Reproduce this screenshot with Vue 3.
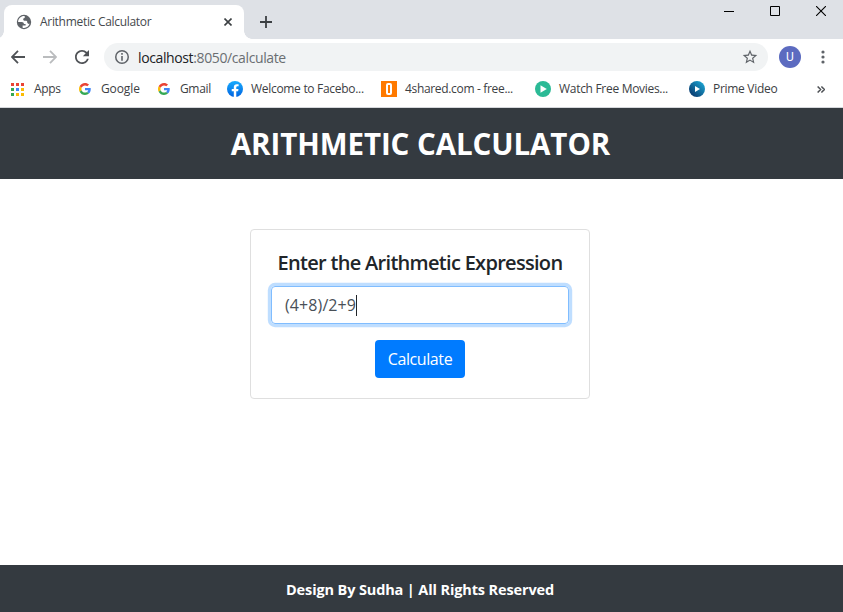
<script setup>
import { ref } from 'vue'

const expression = ref('(4+8)/2+9')

const bookmarks = [
  { id: 'apps', label: 'Apps', width: 68, spacing: -0.3 },
  { id: 'google', label: 'Google', width: 79, spacing: -0.1 },
  { id: 'google', label: 'Gmail', width: 69, spacing: -0.35 },
  { id: 'facebook', label: 'Welcome to Facebo...', width: 154, spacing: -0.3 },
  { id: 'shared', label: '4shared.com - free...', width: 154, spacing: -0.33 },
  { id: 'movies', label: 'Watch Free Movies...', width: 154, spacing: -0.3 },
  { id: 'prime', label: 'Prime Video', width: 119, spacing: -0.3 },
]
const appColors = ['#ea4335', '#ea4335', '#ea4335', '#34a853', '#4285f4', '#fbbc05', '#34a853', '#fbbc05', '#fbbc05']
</script>

<template>
  <div class="window">
    <div class="tabstrip">
      <div class="tab">
        <svg class="globe" width="16" height="16" viewBox="0 0 16 16"><circle cx="8" cy="8" r="7.200" fill="#5f6368" /><path fill="#fff" d="M8.700 2.100C5.300 1.800 2.300 4.400 2.100 7.900h3.700c1.400 0 2.100.8 2.100 2.100h1.700v1.600H6.600v2.100c3 .8 6.200-.9 7.100-4.100-.7.500-1.800.4-2.300-.5-.4-1 .1-1.500-.6-2-.8-.6-2.500.2-3.300-.8-.7-.9-.2-2.200 1.200-2.200V2.100z" /></svg>
        <span class="tab-title">Arithmetic Calculator</span>
        <svg class="tab-close" width="8" height="8" viewBox="0 0 8 8"><path d="M.5.5l7 7M7.500.5l-7 7" stroke="#3c4043" stroke-width="1.600" /></svg>
      </div>
      <svg class="new-tab" width="12" height="12" viewBox="0 0 12 12"><path d="M6 0v12M0 6h12" stroke="#3c4043" stroke-width="1.800" /></svg>
      <div class="controls">
        <svg width="10" height="10" viewBox="0 0 10 10"><path d="M0 5.500h10" stroke="#000" /></svg>
        <svg width="10" height="10" viewBox="0 0 10 10"><path d="M.5.5h9v9h-9z" stroke="#000" fill="none" /></svg>
        <svg width="10" height="10" viewBox="0 0 10 10"><path d="M0 0l10 10M10 0L0 10" stroke="#000" stroke-width="1.100" /></svg>
      </div>
    </div>

    <div class="toolbar">
      <svg class="back" width="14" height="14" viewBox="0 0 14 14"><path d="M14 7H1M7 .8L.9 7 7 13.200" fill="none" stroke="#4f5256" stroke-width="1.800" /></svg>
      <svg class="forward" width="14" height="14" viewBox="0 0 14 14"><path d="M0 7h13M7 .8L13.100 7 7 13.200" fill="none" stroke="#babcbe" stroke-width="1.800" /></svg>
      <svg class="reload" width="14" height="14" viewBox="4 4 16 16"><path fill="#4f5256" d="M17.650 6.350C16.200 4.900 14.210 4 12 4c-4.420 0-7.990 3.580-7.990 8s3.570 8 7.990 8c3.730 0 6.840-2.550 7.730-6h-2.080c-.82 2.330-3.040 4-5.650 4-3.310 0-6-2.690-6-6s2.690-6 6-6c1.660 0 3.140.69 4.220 1.780L13 11h7V4l-2.350 2.350z" /></svg>
      <div class="omnibox">
        <svg width="14" height="14" viewBox="0 0 14 14"><circle cx="7" cy="7" r="6.250" fill="none" stroke="#5f6368" stroke-width="1.500" /><path d="M7 3.100v1.700M7 6v4.800" stroke="#5f6368" stroke-width="1.600" /></svg>
        <span class="url"><b>localhost</b>:8050/calculate</span>
        <svg class="star" width="16" height="16" viewBox="1 1 22 22"><path fill="#5f6368" d="M22 9.240l-7.190-.62L12 2 9.190 8.630 2 9.240l5.460 4.730L5.820 21 12 17.270 18.180 21l-1.630-7.030L22 9.240zM12 15.400l-3.760 2.270 1-4.280-3.320-2.880 4.380-.38L12 6.100l1.710 4.040 4.380.38-3.320 2.880 1 4.280L12 15.400z" /></svg>
      </div>
      <span class="avatar">U</span>
      <svg class="menu" width="4" height="14" viewBox="0 0 4 14" fill="#5f6368"><circle cx="2" cy="2" r="1.600" /><circle cx="2" cy="7" r="1.600" /><circle cx="2" cy="12" r="1.600" /></svg>
    </div>

    <div class="bookmarks">
      <div v-for="b in bookmarks" :key="b.label" class="bookmark" :class="'mark-' + b.id" :style="{ width: b.width + 'px' }">
        <svg v-if="b.id === 'apps'" width="13" height="13" viewBox="0 0 13 13"><rect v-for="(c, i) in appColors" :key="i" :x="(i % 3) * 5" :y="Math.floor(i / 3) * 5" width="3" height="3" :fill="c" /></svg>
        <svg v-else-if="b.id === 'google'" width="12" height="12" viewBox="0 0 48 48">
          <path fill="#ea4335" d="M24 9.500c3.540 0 6.710 1.220 9.210 3.600l6.850-6.850C35.900 2.380 30.470 0 24 0 14.620 0 6.510 5.380 2.560 13.220l7.980 6.190C12.430 13.720 17.740 9.500 24 9.500z" />
          <path fill="#4285f4" d="M46.980 24.550c0-1.570-.15-3.090-.38-4.550H24v9.020h12.940c-.58 2.960-2.260 5.480-4.780 7.180l7.730 6c4.510-4.180 7.090-10.360 7.090-17.650z" />
          <path fill="#fbbc05" d="M10.530 28.590c-.48-1.450-.76-2.990-.76-4.590s.27-3.140.76-4.590l-7.980-6.190C.92 16.460 0 20.120 0 24c0 3.880.92 7.540 2.560 10.780l7.970-6.190z" />
          <path fill="#34a853" d="M24 48c6.480 0 11.930-2.130 15.890-5.810l-7.730-6c-2.150 1.450-4.920 2.300-8.160 2.300-6.260 0-11.570-4.220-13.470-9.910l-7.980 6.190C6.510 42.620 14.620 48 24 48z" />
        </svg>
        <svg v-else-if="b.id === 'facebook'" width="16" height="16" viewBox="0 0 24 24"><defs><linearGradient id="fb" x2="0" y2="1"><stop stop-color="#18acfe" /><stop offset="1" stop-color="#0163e0" /></linearGradient></defs><circle cx="12" cy="12" r="12" fill="url(#fb)" /><path fill="#fff" d="M16.700 15.500l.5-3.500h-3.300V9.800c0-1 .5-1.900 2-1.900h1.500v-3s-1.400-.2-2.700-.2c-2.800 0-4.500 1.700-4.500 4.700V12H7.100v3.500h3.100v8.350a12 12 0 0 0 3.700 0V15.500z" /></svg>
        <svg v-else-if="b.id === 'shared'" width="16" height="16" viewBox="0 0 16 16"><path fill="#ff7a00" d="M0 0h16v16H0z" /><rect x="6" y="3" width="4" height="10" rx="1" fill="none" stroke="#fff" stroke-width="2" /></svg>
        <svg v-else-if="b.id === 'movies'" width="16" height="16" viewBox="0 0 16 16"><circle cx="8" cy="8" r="8" fill="#2bba96" /><path d="M5.500 4.200v7.600L11.800 8z" fill="#fff" /></svg>
        <svg v-else width="16" height="16" viewBox="0 0 16 16"><defs><linearGradient id="pv" x1="1" x2="0" y2="1"><stop offset=".1" stop-color="#1ba4d2" /><stop offset=".8" stop-color="#0b4478" /></linearGradient></defs><circle cx="8" cy="8" r="8" fill="url(#pv)" /><path d="M6 5v6l5-3z" fill="#fff" /></svg>
        <span class="label" :style="{ letterSpacing: b.spacing + 'px' }">{{ b.label }}</span>
      </div>
      <svg class="more" width="8" height="7" viewBox="0 0 8 7"><path d="M.6.5l3 3-3 3M4.400.5l3 3-3 3" fill="none" stroke="#4f5256" stroke-width="1.500" /></svg>
    </div>

    <header class="banner"><h1>ARITHMETIC CALCULATOR</h1></header>
    <main>
      <form class="card" @submit.prevent>
        <h2>Enter the Arithmetic Expression</h2>
        <div class="field"><span class="value">{{ expression }}</span><i class="caret"></i></div>
        <button type="submit">Calculate</button>
      </form>
    </main>
    <footer><span>Design By Sudha | All Rights Reserved</span></footer>
  </div>
</template>

<style>
body { margin: 0; background: #fff; overflow: hidden; }
</style>

<style scoped>
* { box-sizing: border-box; }
svg { display: block; flex: none; }
.window { width: 843px; height: 612px; display: flex; flex-direction: column; font-family: "Open Sans", "Noto Sans", sans-serif; color: #212529; white-space: nowrap; background: #fff; overflow: hidden; }
.tabstrip { height: 39px; flex: none; display: flex; background: #dee1e6; padding-left: 4px; }
.tab { position: relative; width: 240px; height: 34px; margin-top: 5px; background: #fff; border-radius: 8px 8px 0 0; display: flex; align-items: center; padding: 0 12px; }
.tab::before, .tab::after { content: ""; position: absolute; bottom: 0; width: 8px; height: 8px; }
.tab::before { left: -8px; background: radial-gradient(circle at 0 0, transparent 7.500px, #fff 8px); }
.tab::after { right: -8px; background: radial-gradient(circle at 100% 0, transparent 7.500px, #fff 8px); }
.tab-title { margin-left: 8px; font-size: 12px; letter-spacing: -0.3px; color: #45494d; padding-bottom: 1px; }
.tab-close { margin-left: auto; }
.new-tab { margin: 16px 0 0 16px; }
.controls { margin-left: auto; display: flex; gap: 36px; padding: 6px 17px 0 0; }
.toolbar { height: 36px; flex: none; display: flex; align-items: center; padding-left: 11px; }
.forward { margin-left: 18px; }
.reload { margin-left: 18px; }
.omnibox { width: 664px; height: 28px; margin-left: 15px; border-radius: 14px; background: #f1f3f4; display: flex; align-items: center; padding: 0 10px 0 11px; }
.url { margin-left: 9px; font-size: 14px; letter-spacing: -0.38px; color: #6a6e72; }
.url b { font-weight: 400; color: #202124; }
.star { margin-left: auto; }
.avatar { width: 22px; height: 22px; margin-left: 11px; border-radius: 50%; background: #5c6bc0; color: #fff; font: 12px/22px Roboto, sans-serif; text-align: center; }
.menu { margin-left: 19.500px; }
.bookmarks { height: 33px; flex: none; display: flex; align-items: center; padding: 0 18px 4px 11px; border-bottom: 1px solid #d5d7db; font-size: 12px; color: #3c4043; }
.bookmark { display: flex; align-items: center; gap: 8px; flex: none; }
.label { padding-bottom: 1px; }
.mark-apps { gap: 10px; }
.mark-google { gap: 10px; }
.more { margin-left: auto; }
.banner { height: 71px; flex: none; background: #343a40; display: flex; justify-content: center; align-items: center; padding: 1px 2px 0 0; }
h1 { margin: 0; font-size: 29.500px; line-height: 40px; font-weight: 700; letter-spacing: -0.07px; color: #fff; }
main { flex: 1; padding-top: 50px; padding-left: 250px; }
.card { width: 340px; height: 170px; border: 1px solid #dfdfdf; border-radius: 4px; padding: 21px 20px 20px; display: flex; flex-direction: column; align-items: center; }
h2 { margin: 0 0 11px; font-size: 20px; line-height: 24px; font-weight: 600; letter-spacing: -0.7px; }
.field { width: 298px; height: 38px; flex: none; border: 1px solid #80bdff; border-radius: 4px; box-shadow: 0 0 0 3.200px rgba(0,123,255,.25); display: flex; align-items: center; padding: 0 13px; font-size: 16px; color: #495057; }
.value { letter-spacing: 0.1px; }
.caret { width: 1px; height: 21px; background: #212529; }
button { width: 90px; height: 38px; flex: none; margin-top: 16px; padding: 0; border: 0; border-radius: 4px; background: #007bff; color: #fff; font: 16px "Open Sans", sans-serif; letter-spacing: -0.4px; }
footer { height: 47px; flex: none; background: #343a40; color: #fff; display: flex; align-items: center; justify-content: center; padding: 2px 3px 0 0; font-size: 14.500px; font-weight: 700; letter-spacing: -0.13px; }
</style>
